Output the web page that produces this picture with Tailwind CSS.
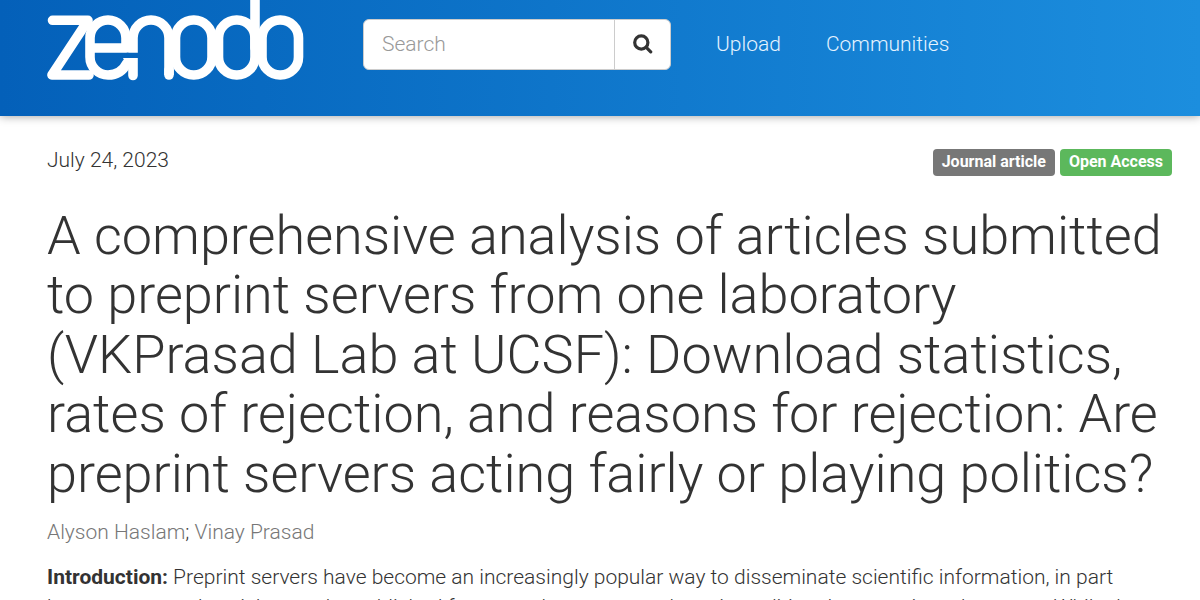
<!DOCTYPE html>
<html lang="en">
<head>
    <meta charset="UTF-8">
    <meta name="viewport" content="width=device-width, initial-scale=1.0">
    <title>A comprehensive analysis of articles submitted to preprint servers | Zenodo</title>
    <script src="https://cdn.jsdelivr.net/npm/@tailwindcss/browser@4"></script>
</head>
<body class="bg-white font-['Roboto',sans-serif] text-[21px] leading-[30px] font-light text-[#333] overflow-x-hidden">

    <!-- Navbar -->
    <header class="bg-linear-to-r from-[#0460b9] to-[#1c8ede] shadow-[0_0_9px_rgba(0,0,0,0.4)] pb-[35px] pl-[47px] pr-7">
        <nav class="flex items-start">
            <a href="#" aria-label="Zenodo" class="shrink-0">
                <svg class="block w-[257px] h-[81px]" viewBox="0 0 257 81" fill="none" stroke="#fff" stroke-width="9.6" stroke-linecap="round" stroke-linejoin="round">
                    <!-- z -->
                    <path d="M5.500 20.300H41L5 75H42"/>
                    <!-- e -->
                    <path d="M45 48H79V38A18 18 0 0 0 43 38V57A18 18 0 0 0 61 75C70 75 76 71 80 63"/>
                    <path d="M76 58H90.800V75.500A4.800 4.800 0 0 1 81.200 75.500V68Z" fill="#fff" stroke="none"/>
                    <!-- n -->
                    <path d="M86 52.800V38A18 18 0 0 1 122 38V75" stroke-linecap="butt"/>
                    <path d="M122 70V75"/>
                    <!-- o d o -->
                    <rect x="128.500" y="20" width="36.500" height="55" rx="18"/>
                    <rect x="171.500" y="20" width="36.500" height="55" rx="18"/>
                    <path d="M208 -6V48"/>
                    <rect x="215" y="20" width="36.500" height="55" rx="18"/>
                </svg>
            </a>
            <form class="ml-[59px] mt-[19px] flex h-[51px] w-[308px] rounded-md border border-[#ccc] bg-white" onsubmit="return false">
                <input type="text" name="p" aria-label="Search" placeholder="Search" class="min-w-0 flex-1 rounded-l-md px-[18px] pb-0.5 placeholder:text-[#999] outline-none">
                <button type="submit" aria-label="Search" class="flex w-14 items-center justify-center rounded-r-md border-l border-[#ccc] pb-0.5">
                    <svg class="size-5" viewBox="0 0 20 20" fill="none" stroke="#333" stroke-width="3.200" stroke-linecap="round">
                        <circle cx="8.300" cy="8.500" r="6.600"/>
                        <path d="M13.500 13.700L17.700 17.900"/>
                    </svg>
                </button>
            </form>
            <a href="#" class="ml-[45px] mt-[29px] text-[#e5f3ff]">Upload</a>
            <a href="#" class="ml-[45px] mt-[29px] text-[#e5f3ff]">Communities</a>
        </nav>
    </header>

    <!-- Record -->
    <main class="pl-[47px] pr-7 pt-[29px]">
        <div class="flex justify-between">
            <time datetime="2023-07-24">July 24, 2023</time>
            <div class="mt-1 flex gap-[5px] text-base leading-[25px] font-bold text-white">
                <span class="h-[27px] rounded-sm bg-[#777] px-[9px]">Journal article</span>
                <span class="h-[27px] rounded-sm bg-[#5cb85c] px-[9px]">Open Access</span>
            </div>
        </div>

        <h1 class="mt-[30px] text-[54px] leading-[1.1]">A comprehensive analysis of articles submitted to preprint servers from one laboratory (VKPrasad Lab at UCSF): Download statistics, rates of rejection, and reasons for rejection: Are preprint servers acting fairly or playing politics?</h1>

        <p class="mt-3.5">
            <a href="#" class="text-[#777]">Alyson Haslam</a>; <a href="#" class="text-[#777]">Vinay Prasad</a>
        </p>

        <p class="mt-[15px]"><strong class="font-bold">Introduction:</strong> Preprint servers have become an increasingly popular way to disseminate scientific information, in part because research articles can be published faster on these servers than via traditional peer-reviewed sources. While the</p>
    </main>

</body>
</html>
